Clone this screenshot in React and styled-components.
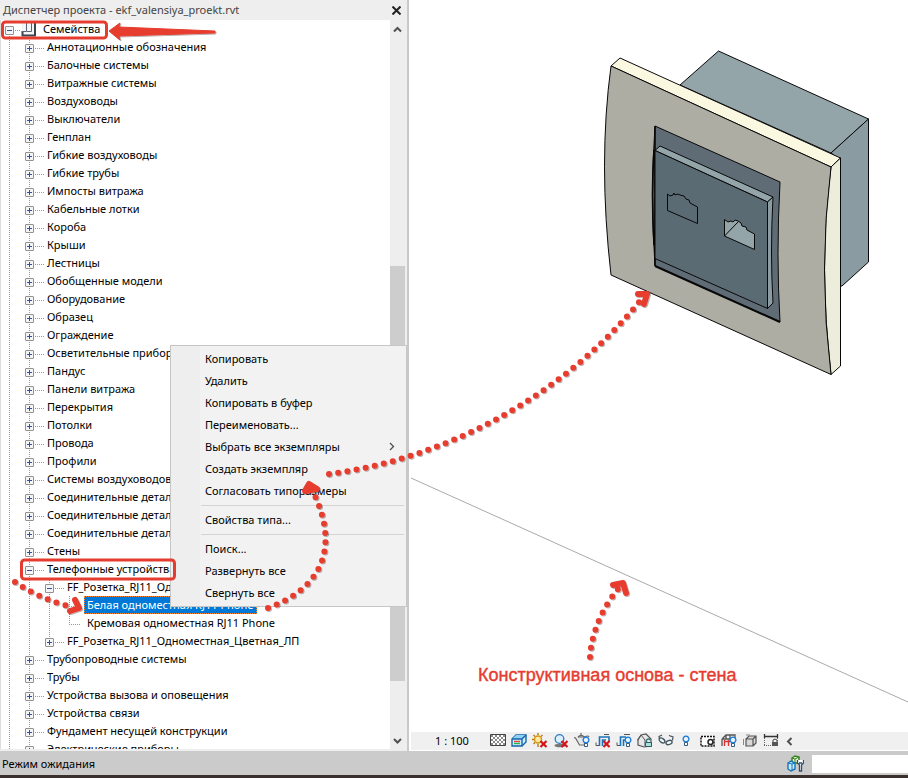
import React from "react";
import styled, { createGlobalStyle, css } from "styled-components";

const RED = "#e63c2f";

const GlobalStyle = createGlobalStyle`
  * { box-sizing: border-box; }
  body { margin: 0; background: #fff; }
  body, button, input { font-family: "Noto Sans", "Open Sans", sans-serif; font-size: 11px; color: #000; }
  ul { list-style: none; margin: 0; padding: 0; }
`;

const Page = styled.div`
  position: relative;
  display: flex;
  flex-direction: column;
  height: 100vh;
  overflow: hidden;
`;

const Workspace = styled.div`
  flex: 1;
  min-height: 0;
  display: flex;
`;

const Browser = styled.aside`
  flex: 0 0 409px;
  display: flex;
  flex-direction: column;
  background: #eee;
  border-right: 2px solid #c9c9c9;
  padding-bottom: 2px;
`;

const TitleBar = styled.header`
  display: flex;
  align-items: center;
  justify-content: space-between;
  height: 20px;
  flex: none;
  padding: 0 6px 0 3px;
`;

const Title = styled.h1`
  margin: 0;
  font-size: 11px;
  line-height: 20px;
  font-weight: 400;
  color: #444;
  white-space: nowrap;
`;

const PlainButton = styled.button`
  display: flex;
  align-items: center;
  justify-content: center;
  flex: none;
  padding: 0;
  border: 0;
  background: none;
`;

const BrowserBody = styled.div`
  flex: 1;
  min-height: 0;
  display: flex;
  padding-right: 2px;
`;

const Tree = styled.ul`
  flex: 1;
  min-width: 0;
  overflow: hidden;
  background: #fff;
  border-left: 1px solid #ddd;
`;

const Row = styled.li`
  display: flex;
  height: 18px;
  white-space: nowrap;
`;

const vertical = "repeating-linear-gradient(#999 0 1px, transparent 1px 2px)";
const horizontal = "repeating-linear-gradient(90deg, #999 0 1px, transparent 1px 2px)";

const Indent = styled.span`
  flex: none;
  width: 20px;
  background: ${vertical} 8px 0 / 1px ${(p) => (p.$end ? "10px" : "100%")} no-repeat;
  ${(p) => p.$branch && css`
    background: ${horizontal} 8px 10px / 12px 1px no-repeat,
      ${vertical} 8px 0 / 1px ${p.$end ? "10px" : "100%"} no-repeat;
  `}
`;

const Toggle = styled.button`
  display: block;
  width: 9px;
  height: 9px;
  margin: 6px 0 0 4px;
  padding: 0;
  border: 1px solid #919191;
  border-radius: 1px;
  background:
    linear-gradient(#34529a, #34529a) center / 5px 1px no-repeat,
    linear-gradient(#34529a, #34529a) center / ${(p) => (p.$open ? "0 0" : "1px 5px")} no-repeat,
    #f5f5f5;
`;

const Branch = styled.span`
  flex: none;
  width: ${(p) => (p.$root ? "20px" : "24px")};
  background:
    ${horizontal} 14px 10px / 10px 1px no-repeat,
    ${vertical} 8px ${(p) => (p.$root ? "10px" : "0")} / 1px ${(p) => (p.$end ? "10px" : "100%")} no-repeat;
`;

const Label = styled.span`
  line-height: 18px;
  padding: 0 2px;
  ${(p) => p.$root && css`
    margin-left: 5px;
  `}
  ${(p) => p.$leaf && css`
    margin-left: 3px;
    padding: 0 3px;
  `}
  ${(p) => p.$selected && css`
    color: #fff;
    background: #0078d7;
    outline: 1px dotted #ff8728;
    outline-offset: -1px;
  `}
`;

const ScrollBar = styled.div`
  width: 15px;
  flex: none;
  display: flex;
  flex-direction: column;
`;

const ScrollButton = styled(PlainButton)`
  height: 18px;
`;

const Track = styled.div`
  flex: ${(p) => p.$size} 1 0;
`;

const Thumb = styled(Track)`
  background: #cdcdcd;
`;

const Viewport = styled.main`
  flex: 1;
  min-width: 0;
  display: flex;
  flex-direction: column;
  padding: 0 0 1px 2px;
`;

const Canvas = styled.div`
  flex: 1;
  min-height: 0;
  overflow: hidden;
  svg { display: block; }
`;

const ViewBar = styled.div`
  display: flex;
  align-items: center;
  gap: 5px;
  height: 18px;
  flex: none;
  padding-left: 24px;
  background: #f0f0f0;
`;

const Scale = styled.span`
  width: 50px;
  line-height: 18px;
`;

const StatusBar = styled.footer`
  flex: none;
  display: flex;
  align-items: center;
  gap: 8px;
  height: 27px;
  padding: 1px 0 0 2px;
  background: #cbcbcb;
  border-bottom: 3px solid #3a302e;
`;

const StatusText = styled.label`
  flex: 1;
  line-height: 18px;
`;

const StatusInput = styled.input`
  width: 96px;
  height: 18px;
  border: 0;
  padding: 0 4px;
  background: #fff;
`;

const Menu = styled.ul`
  position: absolute;
  left: 170px;
  top: 345px;
  width: 237px;
  && { padding: 2px; }
  background: linear-gradient(90deg, #eeeeee 29px, #f2f2f2 29px);
  border: 1px solid #c6c6c6;
`;

const MenuButton = styled.button`
  display: flex;
  align-items: center;
  justify-content: space-between;
  width: 100%;
  height: 22px;
  padding: 0 8px 1px 32px;
  border: 0;
  background: none;
  text-align: left;
  white-space: nowrap;
`;

const Divider = styled.li`
  height: 7px;
  margin-left: 28px;
  background: linear-gradient(#d4d4d4, #d4d4d4) 0 3px / 100% 1px no-repeat;
`;

const Annotations = styled.svg`
  position: absolute;
  left: 0;
  top: 0;
  pointer-events: none;
`;

const Caption = styled.p`
  position: absolute;
  left: 478px;
  top: 664px;
  margin: 0;
  font: 18px/22px "Liberation Sans", Arial, sans-serif;
  -webkit-text-stroke: 0.4px ${RED};
  color: ${RED};
  white-space: nowrap;
`;

const plain = (names) => names.map((label) => ({ label, level: 1 }));

const rows = [
  ...plain([
    "Аннотационные обозначения", "Балочные системы", "Витражные системы", "Воздуховоды",
    "Выключатели", "Генплан", "Гибкие воздуховоды", "Гибкие трубы", "Импосты витража",
    "Кабельные лотки", "Короба", "Крыши", "Лестницы", "Обобщенные модели", "Оборудование",
    "Образец", "Ограждение", "Осветительные приборы", "Пандус", "Панели витража", "Перекрытия",
    "Потолки", "Провода", "Профили", "Системы воздуховодов", "Соединительные детали воздуховодов",
    "Соединительные детали кабельных лотков", "Соединительные детали трубопроводов", "Стены",
  ]),
  { label: "Телефонные устройства", level: 1, open: true },
  { label: "FF_Розетка_RJ11_Одноместная_ЛП", level: 2, open: true },
  { label: "Белая одноместная RJ11 Phone", level: 3, selected: true },
  { label: "Кремовая одноместная RJ11 Phone", level: 3, end: true },
  { label: "FF_Розетка_RJ11_Одноместная_Цветная_ЛП", level: 2, end: true },
  ...plain([
    "Трубопроводные системы", "Трубы", "Устройства вызова и оповещения", "Устройства связи",
    "Фундамент несущей конструкции", "Электрические приборы",
  ]),
];

const menuGroups = [
  ["Копировать", "Удалить", "Копировать в буфер", "Переименовать...", "Выбрать все экземпляры", "Создать экземпляр", "Согласовать типоразмеры"],
  ["Свойства типа..."],
  ["Поиск...", "Развернуть все", "Свернуть все"],
];

function TreeRow({ label, level, open, selected, end }) {
  const leaf = level === 3;
  return (
    <Row>
      {Array.from({ length: level }, (_, i) => <Indent key={i} />)}
      {leaf ? (
        <Indent $branch $end={end} />
      ) : (
        <Branch $end={end}>
          <Toggle $open={open} aria-label={`${open ? "Свернуть" : "Развернуть"}: ${label}`} />
        </Branch>
      )}
      <Label $leaf={leaf} $selected={selected}>{label}</Label>
    </Row>
  );
}

const Chevron = ({ d, size = 9, color = "#505050", width = 2 }) => (
  <svg width={size} height={size} viewBox="0 0 9 9" fill="none" stroke={color} strokeWidth={width}><path d={d} /></svg>
);

const FamilyIcon = () => (
  <svg width="15" height="18" viewBox="0 0 15 18" fill="none">
    <path d="M1 2H14V16H1V11Z" fill="#f3f4f6" />
    <path d="M1.500 11V15.500H14V2" stroke="#3b434e" strokeWidth="2" />
    <path d="M5.500 2V11.500H10.500V2M1 11.500H5" stroke="#59626e" />
  </svg>
);

const Cross = () => <path d="M8.500 8l6 6M14.500 8l-6 6" stroke="#d4131b" strokeWidth="2.2" />;
const Bulb = ({ x = 8, y = 6 }) => (
  <g transform={`translate(${x} ${y})`}>
    <circle r="2.9" fill="#e5f3ff" stroke="#1679d3" strokeWidth="1.3" />
    <path d="M-1.5 3.5h3v3h-3z" fill="#fff" stroke="#345b80" />
  </g>
);

const icons = [
  ["Уровень детализации", <>
    <path d="M.5 1.5h15v11H.5z" fill="#fff" stroke="#444" />
    {[3, 5, 7, 9, 11].map((y, i) => <path key={y} d={`M${1 + (i % 2) * 2} ${y}H15`} stroke="#8a8a8a" strokeWidth="2" strokeDasharray="2 2" />)}
  </>],
  ["Визуальный стиль", <>
    <path d="M1 6l4-4h10v7l-4 4H1z" fill="#cfeeff" stroke="#1464a8" strokeWidth="1.4" />
    <path d="M5 2h10l-4 4H1z" fill="#8fd0f5" />
    <path d="M1 6h10v7M11 6l4-4" fill="none" stroke="#1464a8" strokeWidth="1.4" />
    <path d="M3 8.500h6" stroke="#e43" strokeWidth="1.4" /><path d="M3 10.500h6" stroke="#2b4" strokeWidth="1.4" />
  </>],
  ["Траектория солнца", <>
    <path d="M6 0v2M6 11v3M0 6.500h2M1.500 2l1.500 1.500M10.500 2L9 3.500M1.500 11L3 9.500" stroke="#b57a13" strokeWidth="1.4" />
    <circle cx="6" cy="6.500" r="3.500" fill="#ffeaa0" stroke="#d69515" strokeWidth="1.4" /><Cross />
  </>],
  ["Тени", <>
    <ellipse cx="7" cy="12.500" rx="5.500" ry="1.800" fill="#777" />
    <circle cx="6.500" cy="6" r="4.300" fill="#d9f0ff" stroke="#3579b5" strokeWidth="1.3" /><Cross />
  </>],
  ["Визуализация", <>
    <path d="M4 4h6.500v8H5.500L1.500 5L0 4.500" fill="#e8e8e8" stroke="#666" strokeWidth="1.200" />
    <path d="M4 4q3-3 6.500 0M7 0v2M11 4q3-2 4 0" stroke="#666" strokeWidth="1.200" /><Bulb x={12} y={7} />
  </>],
  ["Обрезать вид", <>
    <path d="M4.500 13V4H14V9M7.500 13V7H11" stroke="#1873b8" strokeWidth="1.6" />
    <path d="M9 1.500h5M1 9.500v3h3" stroke="#555" /><Cross />
  </>],
  ["Показать границу обрезки", <>
    <path d="M4.500 13V4H10M7.500 13V7H9.500" stroke="#1873b8" strokeWidth="1.6" />
    <path d="M8 1.500h6M1 9.500v3h3" stroke="#555" /><Bulb x={12} y={7} />
  </>],
  ["Заблокировать 3D вид", <>
    <path d="M1 7l3-5 5-1 5 5v7l-7 1-6-2z" fill="#e8e8e8" stroke="#555" strokeWidth="1.2" /><path d="M4 2l4 5v6M0 7.500L4 2" fill="none" stroke="#555" />
    <path d="M9.500 9V7q2-2 4 0" fill="none" stroke="#337575" strokeWidth="1.3" /><path d="M8.500 9.500h6v4h-6z" fill="#a8e1dc" stroke="#356" />
  </>],
  ["Временно скрыть", <>
    <path d="M1.500 6L1 3.500L4 2M14.500 7.500L15 4L11 2.500" fill="none" stroke="#47545c" strokeWidth="1.2" />
    <ellipse cx="4" cy="7.500" rx="3.200" ry="2" fill="#e9f7ff" stroke="#47545c" strokeWidth="1.300" transform="rotate(35 4 7.500)" />
    <ellipse cx="11" cy="9.500" rx="3.200" ry="2" fill="#e9f7ff" stroke="#47545c" strokeWidth="1.300" transform="rotate(-20 11 9.500)" />
  </>],
  ["Показать скрытые элементы", <Bulb x={7} y={6} />],
  ["Временные свойства вида", <>
    <path d="M1 3.500h13V13H1z" fill="#fff" stroke="#111" strokeWidth="1.500" strokeDasharray="2 1" /><circle cx="10.500" cy="9" r="2.500" fill="#fff" stroke="#222" strokeWidth="1.500" />
  </>],
  ["Аналитическая модель", <>
    <path d="M1 6l4-4h9v3M1 6v7M5 2v4M9 2v4M1 6h9" fill="none" stroke="#555" strokeWidth="1.3" /><path d="M3 8.500h6M3.500 7v6M7.500 7v6" stroke="#d33" strokeWidth="1.400" /><Bulb x={12} y={7} />
  </>],
  ["Наборы смещения", <>
    <path d="M4 6h7v7H4zM4 6l3-3h7v7l-3 3M11 6l3-3" fill="#d8d8d8" stroke="#555" strokeWidth="1.200" /><path d="M1.500 6v6M4 2h4" stroke="#888" />
  </>],
  ["Показать зависимости", <>
    <path d="M1.500 1v4M14.500 1v4M1 3.500h14" stroke="#333" strokeWidth="1.3" /><path d="M1 12.500h9M1.500 5v8M14.500 5v4" stroke="#666" strokeDasharray="1 1" />
    <path d="M10 9V7q2-2 4 0v2" fill="none" stroke="#444" /><path d="M9 9h6v4H9z" fill="#555" />
  </>],
];

function SocketView() {
  return (
    <Canvas>
      <svg width="100%" height="732" viewBox="411 0 497 732" preserveAspectRatio="xMinYMin meet" stroke="#080808" strokeLinejoin="round" strokeWidth="1">
        <path d="M411 478L908 702" stroke="#aaa" fill="none" />
        <path d="M718.5 51L868.500 119L831 153L680 85Z" fill="#94a5a9" />
        <path d="M868.500 119V262L842 286H838V158L831 153Z" fill="#8a9ba1" />
        <path d="M611 66L620 58L840.500 158L831 167Z" fill="#fbf8e1" />
        <path d="M831 167L840.500 158V366L831 374.500Q818 262 831 167Z" fill="#ededdb" />
        <path d="M611 66L831 167Q818 270 831 374.500L611 275Q598 162 611 66Z" fill="#adada4" />
        <path d="M655 126L780 182Q776 255 780 322L655 266Q650 195 655 126Z" fill="#5f6c76" strokeWidth="1" />
        <path d="M655 126V266M654 150Q651 192 654 245" fill="none" strokeWidth="1.6" />
        <path d="M655 266L780 322" strokeWidth="2" />
        <path d="M655 150.500L660 146L773 197L767.500 202Z" fill="#94a5a9" />
        <path d="M767.500 202L773 197Q770 252 773 303L767.500 308.500Z" fill="#8a9ba1" />
        <path d="M655 150.500L767.500 202V308.500L655 258.500Z" fill="#5b6b73" />
        <path d="M667.500 194L670 196L673 195L674 193L675 195L678 194L680 195L684 196L686 199L689 200L690 203L697.500 207V223.500L667.500 210.500Z" fill="#5b6b73" />
        <path d="M724.500 219.500L728 222L731 221L733 222L735 220L738 221L741 223L742 226L746 227L747 230L754.500 234V249.500L724.500 236Z" fill="#94a5a9" />
        <path d="M724.500 236L738 222" />
      </svg>
    </Canvas>
  );
}

const dots = { fill: "none", strokeWidth: 6, strokeLinecap: "round", strokeDasharray: "0 9.3" };
const head = { strokeWidth: 6, strokeLinecap: "round", strokeLinejoin: "round" };

function Markup() {
  return (
    <Annotations width="908" height="751" viewBox="0 0 908 751" fill="none" stroke={RED}>
      <defs>
        <filter id="shade" x="-10%" y="-20%" width="120%" height="150%">
          <feDropShadow dx="1" dy="1" stdDeviation="0.7" floodColor="#000" floodOpacity="0.3" />
        </filter>
      </defs>
      <rect x="2.5" y="22" width="104" height="16" rx="3" strokeWidth="3" />
      <rect x="21.5" y="560" width="153" height="19" rx="3" strokeWidth="3" />
      <g filter="url(#shade)">
        <path d="M109 31L120 23L119 27L215 31V33L119 36L120 40Z" fill={RED} strokeWidth="1" strokeLinejoin="round" />
        <path d="M329 474C440 460 560 400 640 301" {...dots} />
        <path d="M638 294L647 294L644 304" {...head} />
        <path d="M268 608C330 585 335 540 315 496" {...dots} />
        <path d="M305 491L309 484L317 489Z" fill={RED} {...head} />
        <path d="M15 582Q38 598 68 606" {...dots} />
        <path d="M75 600L79 608L70 611" {...head} />
        <path d="M590 657C591 635 602 608 618 589" {...dots} />
        <path d="M613 585L623 583L626 593" {...head} />
      </g>
    </Annotations>
  );
}

export default function App() {
  return (
    <Page>
      <GlobalStyle />
      <Workspace>
        <Browser>
          <TitleBar>
            <Title>Диспетчер проекта - ekf_valensiya_proekt.rvt</Title>
            <PlainButton aria-label="Закрыть"><Chevron d="M.5.5l8 8M8.500.5l-8 8" color="#222" /></PlainButton>
          </TitleBar>
          <BrowserBody>
            <Tree>
              <Row>
                <Branch $root><Toggle $open aria-label="Свернуть: Семейства" /></Branch>
                <FamilyIcon />
                <Label $root>Семейства</Label>
              </Row>
              {rows.map((row) => <TreeRow key={row.label} {...row} />)}
            </Tree>
            <ScrollBar>
              <ScrollButton aria-label="Вверх"><Chevron d="M1 6.500l3.500-3.500L8 6.500" /></ScrollButton>
              <Track $size={228} />
              <Thumb $size={416} />
              <Track $size={50} />
              <ScrollButton aria-label="Вниз"><Chevron d="M1 3l3.500 3.500L8 3" /></ScrollButton>
            </ScrollBar>
          </BrowserBody>
        </Browser>
        <Viewport>
          <SocketView />
          <ViewBar>
            <Scale>1 : 100</Scale>
            {icons.map(([name, art]) => (
              <PlainButton key={name} aria-label={name}>
                <svg width="16" height="16" viewBox="0 0 16 16" fill="none">{art}</svg>
              </PlainButton>
            ))}
            <PlainButton aria-label="Скрыть панель"><Chevron d="M7.500 1L4 4.500L7.500 8" /></PlainButton>
          </ViewBar>
        </Viewport>
      </Workspace>
      <StatusBar>
        <StatusText htmlFor="status-field">Режим ожидания</StatusText>
        <PlainButton aria-label="Рабочие наборы">
          <svg width="17" height="17" viewBox="0 0 17 17">
            <path d="M5 3l3-2 4 1v6H5z" fill="#e9f7df" stroke="#35831f" strokeWidth="1.500" /><path d="M5 3l3 1 4-2M8 4v3" stroke="#35831f" fill="none" />
            <path d="M1 8l3-2 4 2v6l-4 2-3-2z" fill="#c8ecff" stroke="#1673ba" strokeWidth="1.400" /><path d="M1 8l4 1 3-1M5 9v7" stroke="#1673ba" fill="none" />
            <path d="M10.500 5v3l2 2v6h2v-6l2-2V5M12 8h3" stroke="#334b67" strokeWidth="1.300" fill="#fff" />
          </svg>
        </PlainButton>
        <StatusInput id="status-field" readOnly />
      </StatusBar>
      <Menu>
        {menuGroups.map((group, index) => (
          <React.Fragment key={group[0]}>
            {index > 0 && <Divider role="separator" />}
            {group.map((name) => (
              <li key={name}>
                <MenuButton>
                  {name}
                  {name === "Выбрать все экземпляры" && <Chevron d="M3 1l3.500 3.500L3 8" width={1.3} />}
                </MenuButton>
              </li>
            ))}
          </React.Fragment>
        ))}
      </Menu>
      <Caption>Конструктивная основа - стена</Caption>
      <Markup />
    </Page>
  );
}
